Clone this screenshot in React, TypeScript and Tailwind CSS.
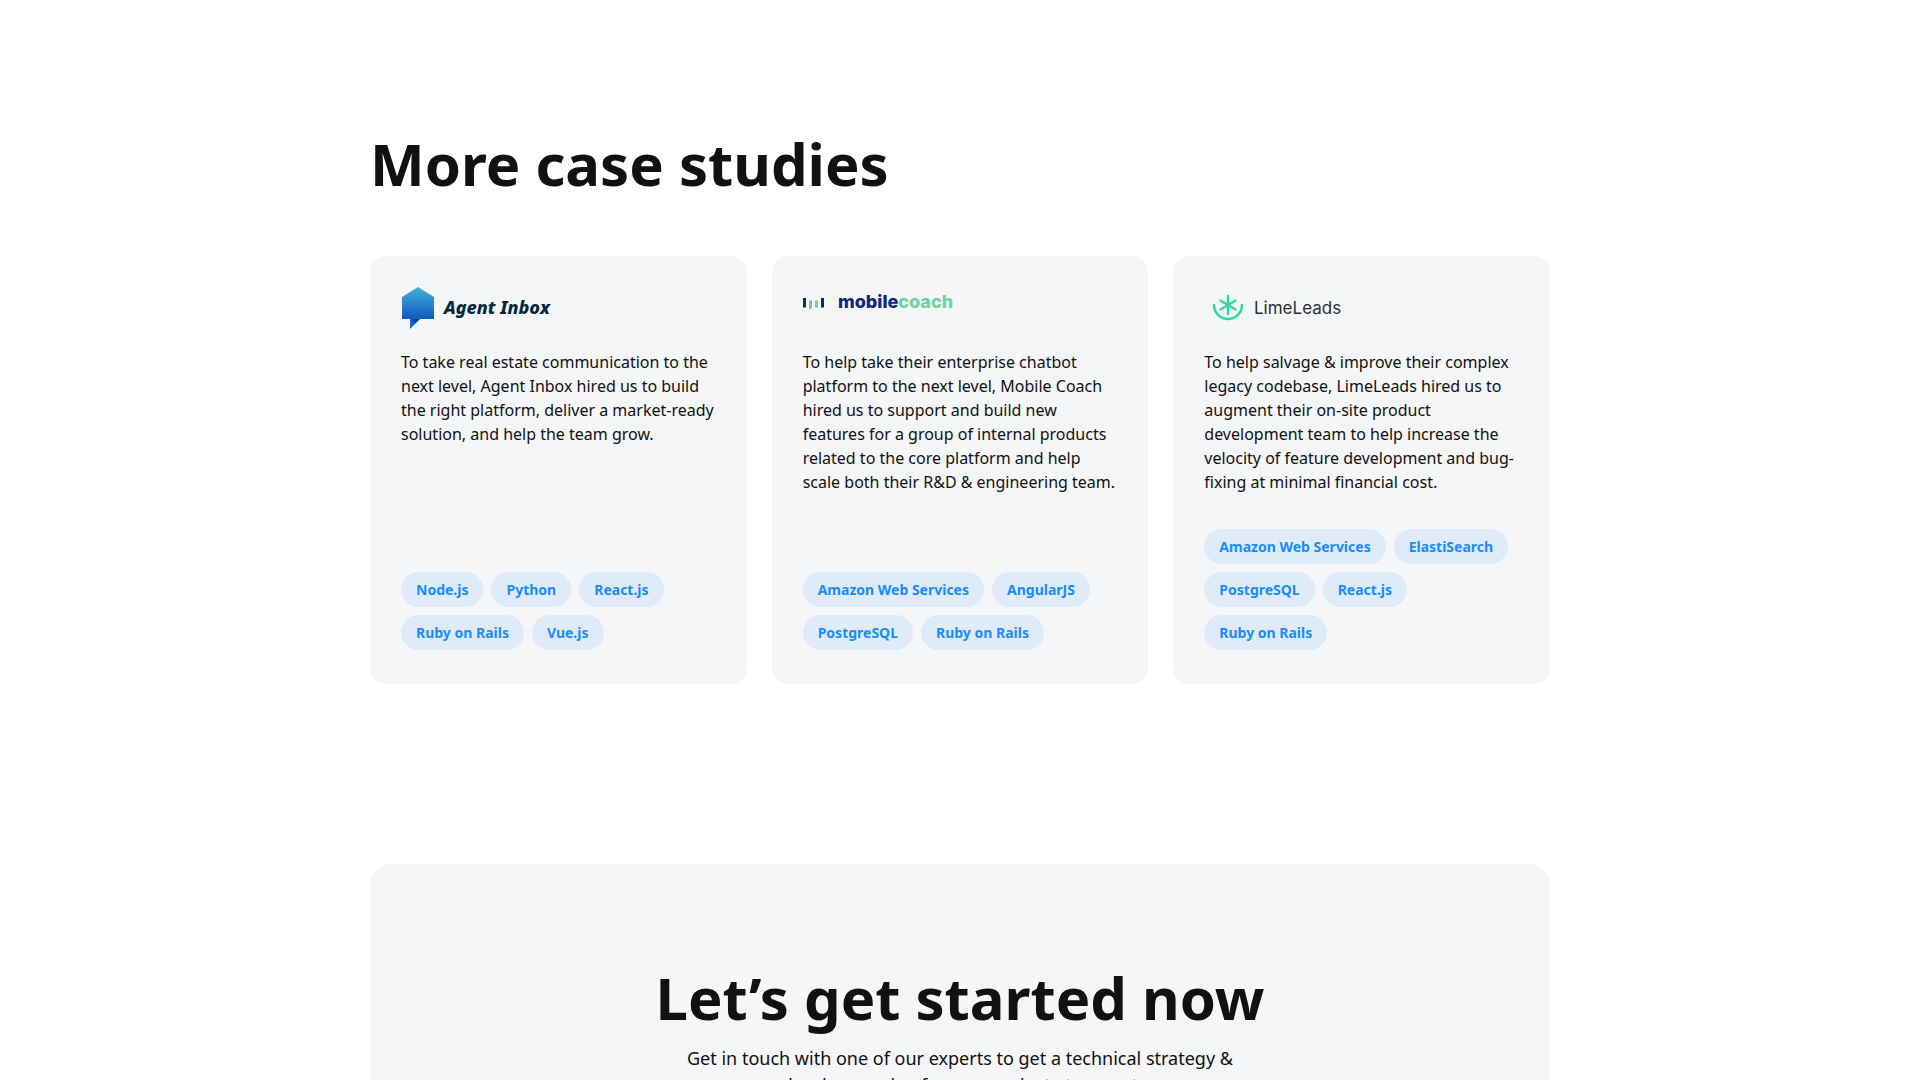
import React from "react";

type Study = { name: string; href: string; logo: React.ReactNode; text: string; tags: string[] };

function AgentInboxLogo() {
  return (
    <svg width="170" height="44" viewBox="0 0 170 44" role="img" aria-label="Agent Inbox" className="block">
      <defs>
        <linearGradient id="agent-body" x1="0" y1="0" x2="0" y2="1">
          <stop offset="0" stopColor="#43b0dc" />
          <stop offset="1" stopColor="#1159c0" />
        </linearGradient>
      </defs>
      <path d="M17 0 33 10V32H1V10Z" fill="url(#agent-body)" />
      <path d="M9 31H20L9 42Z" fill="#1562cc" />
      <path d="M11 32H19L14 36Z" fill="#0b3f94" />
      <text x="43" y="27" fontFamily="'Noto Sans', sans-serif" fontSize="18" fontWeight="800" fontStyle="italic" fill="#04293a">Agent Inbox</text>
    </svg>
  );
}

function MobileCoachLogo() {
  return (
    <svg width="170" height="30" viewBox="0 0 170 30" role="img" aria-label="mobilecoach" className="block">
      <path d="M1.500 11V20.500M19.500 11V20.500" stroke="#0b2a78" strokeWidth="3" />
      <path d="M6 13.500V23L9 21V13.500ZM12 13.500H15V20.500H12Z" fill="#6dd3a0" />
      <text x="35" y="21" fontFamily="Inter, sans-serif" fontSize="18" fontWeight="800" fill="#0b2a78">
        mobile<tspan fill="#6dd3a0">coach</tspan>
      </text>
    </svg>
  );
}

function LimeLeadsLogo() {
  return (
    <svg width="170" height="44" viewBox="0 0 170 44" role="img" aria-label="LimeLeads" className="block">
      <g fill="none" stroke="#29dc97" strokeWidth="2.400" strokeLinecap="round">
        <path d="M10 18A14 14 0 0 0 38 18" />
        <path d="M24 9V27M16.500 13.500 31.500 22.500M31.500 13.500 16.500 22.500" />
      </g>
      <text x="50" y="27" fontFamily="Inter, sans-serif" fontSize="17" fill="#2c2f33">LimeLeads</text>
    </svg>
  );
}

const studies: Study[] = [
  {
    name: "Agent Inbox",
    href: "#agent-inbox",
    logo: <AgentInboxLogo />,
    text: "To take real estate communication to the next level, Agent Inbox hired us to build the right platform, deliver a market-ready solution, and help the team grow.",
    tags: ["Node.js", "Python", "React.js", "Ruby on Rails", "Vue.js"],
  },
  {
    name: "Mobile Coach",
    href: "#mobile-coach",
    logo: <MobileCoachLogo />,
    text: "To help take their enterprise chatbot platform to the next level, Mobile Coach hired us to support and build new features for a group of internal products related to the core platform and help scale both their R&D & engineering team.",
    tags: ["Amazon Web Services", "AngularJS", "PostgreSQL", "Ruby on Rails"],
  },
  {
    name: "LimeLeads",
    href: "#limeleads",
    logo: <LimeLeadsLogo />,
    text: "To help salvage & improve their complex legacy codebase, LimeLeads hired us to augment their on-site product development team to help increase the velocity of feature development and bug-fixing at minimal financial cost.",
    tags: ["Amazon Web Services", "ElastiSearch", "PostgreSQL", "React.js", "Ruby on Rails"],
  },
];

export default function App() {
  return (
    <main className="mx-auto h-screen max-w-[1180px] overflow-hidden bg-white pt-32 font-['Noto_Sans',sans-serif] text-[#111]">
      <section>
        <h2 className="text-[58px] leading-[72px] font-bold">More case studies</h2>
        <div className="mt-14 grid grid-cols-3 gap-[25px]">
          {studies.map((s) => (
            <a key={s.name} href={s.href} className="flex flex-col rounded-2xl bg-[#f4f6f8] px-[31px] pt-[31px] pb-[34px]">
              <div className="h-11">{s.logo}</div>
              <p className="mt-[19px] mb-[35px] text-base leading-6">{s.text}</p>
              <ul className="mt-auto flex flex-wrap gap-2">
                {s.tags.map((t) => (
                  <li key={t} className="rounded-full bg-[#dfebf9] px-[15px] py-[7px] text-sm leading-[21px] font-bold text-[#1a8cff]">
                    {t}
                  </li>
                ))}
              </ul>
            </a>
          ))}
        </div>
      </section>
      <section className="mt-[180px] rounded-[20px] bg-[#f4f6f8] px-8 py-[98px] text-center">
        <h2 className="text-[58px] leading-[72px] font-bold">Let’s get started now</h2>
        <p className="mx-auto mt-[11px] max-w-[600px] text-lg leading-[27px]">
          Get in touch with one of our experts to get a technical strategy & developers plan for our product at no cost
        </p>
      </section>
    </main>
  );
}
